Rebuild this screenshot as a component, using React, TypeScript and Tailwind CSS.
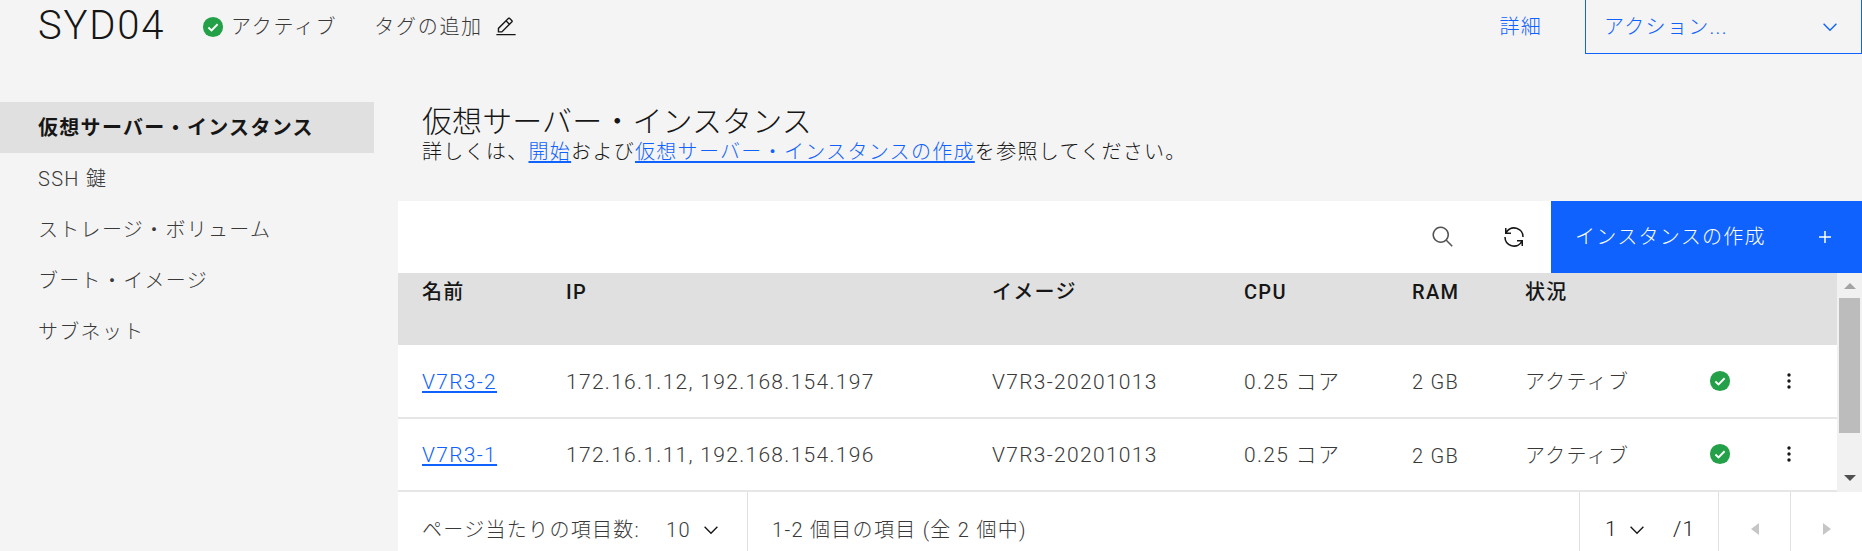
const font = "font-['Roboto','Noto_Sans_CJK_JP',sans-serif]";

const navItems = ["SSH 鍵", "ストレージ・ボリューム", "ブート・イメージ", "サブネット"];

const rows = [
  { name: "V7R3-2", ip: "172.16.1.12, 192.168.154.197" },
  { name: "V7R3-1", ip: "172.16.1.11, 192.168.154.196" },
];

const columns = "grid grid-cols-[24px_144px_426px_252px_168px_113px_184px_70px_1fr]";

function Chevron({ className }: { className: string }) {
  return (
    <svg viewBox="0 0 32 32" className={className} fill="currentColor">
      <path d="M16 22L6 12l1.4-1.4 8.6 8.6 8.6-8.6L26 12z" />
    </svg>
  );
}

function StatusIcon() {
  return (
    <svg viewBox="0 0 24 24" className="h-[22px] w-[22px]">
      <circle cx="12" cy="12" r="11" fill="#24a148" />
      <path d="M7 12.5l3.4 3.2L17 9" fill="none" stroke="#fff" strokeWidth="2" />
    </svg>
  );
}

function Dots() {
  return (
    <svg viewBox="0 0 20 20" className="h-5 w-5" fill="#161616">
      <circle cx="10" cy="4" r="1.7" />
      <circle cx="10" cy="10" r="1.7" />
      <circle cx="10" cy="16" r="1.7" />
    </svg>
  );
}

export default function App() {
  return (
    <div className={`${font} h-[551px] w-[1862px] overflow-hidden bg-[#f4f4f4] font-light tracking-[1.3px] text-[#161616]`}>
      <header className="flex h-[54px] items-center">
        <h1 className="ml-[38px] mb-[2px] w-[132px] text-[40px] leading-none tracking-[1.8px]">SYD04</h1>
        <div className="ml-[32px] flex items-center gap-[7px] text-[20px] tracking-[1.7px] text-[#393939]">
          <StatusIcon />
          <span>アクティブ</span>
        </div>
        <div className="ml-[37px] flex items-center gap-[12px] text-[20px] tracking-[1.7px] text-[#393939]">
          <span>タグの追加</span>
          <svg viewBox="0 0 32 32" className="h-[22px] w-[22px]" fill="#161616">
            <path d="M2 26H30V28H2zM25.4 9c.8-.8.8-2 0-2.8l-3.6-3.6c-.8-.8-2-.8-2.8 0l-15 15V24h6.4L25.4 9zM20.4 4L24 7.6l-3 3L17.4 7 20.4 4zM6 22v-3.6l10-10 3.6 3.6-10 10H6z" />
          </svg>
        </div>
        <a className="ml-auto text-[20px] text-[#0f62fe]">詳細</a>
        <div className="ml-[43px] flex h-[54px] w-[277px] items-center justify-between border-x border-b border-[#0f62fe] pl-[18px] pr-[20px] text-[20px] text-[#0f62fe]">
          <span>アクション...</span>
          <Chevron className="h-[22px] w-[22px]" />
        </div>
      </header>

      <div className="flex">
        <nav className="mt-[48px] w-[374px] shrink-0">
          <div className="flex h-[51px] items-center bg-[#e0e0e0] pl-[38px] text-[20px] font-bold">仮想サーバー・インスタンス</div>
          {navItems.map((item) => (
            <div key={item} className="flex h-[51px] items-center pl-[38px] text-[20px] text-[#393939]">
              {item}
            </div>
          ))}
        </nav>

        <main className="ml-[24px] flex-1">
          <div className="ml-[24px] mt-[50px] h-[97px]">
            <h2 className="text-[30px] leading-[36px] tracking-[0.1px]">仮想サーバー・インスタンス</h2>
            <p className="text-[20px] leading-[24px]">
              詳しくは、<a className="text-[#0f62fe] underline underline-offset-2">開始</a>および
              <a className="text-[#0f62fe] underline underline-offset-2">仮想サーバー・インスタンスの作成</a>を参照してください。
            </p>
          </div>

          <div className="flex h-[72px] items-center justify-end bg-white">
            <svg viewBox="0 0 32 32" className="mr-[47px] h-[24px] w-[24px]" fill="#525252">
              <path d="M29 27.586l-7.552-7.552a11.018 11.018 0 1 0-1.414 1.414L27.586 29zM4 13a9 9 0 1 1 9 9 9.01 9.01 0 0 1-9-9z" />
            </svg>
            <svg viewBox="0 0 32 32" className="mr-[25px] h-[24px] w-[24px]" fill="#161616">
              <path d="M12 10H6.78A11 11 0 0 1 27 16h2A13 13 0 0 0 6 7.68V4H4v8h8zM20 22h5.22A11 11 0 0 1 5 16H3a13 13 0 0 0 23 8.32V28h2v-8h-8z" />
            </svg>
            <button className="flex h-[72px] w-[311px] items-center justify-between bg-[#0f62fe] pl-[24px] pr-[25px] text-[20px] text-white">
              <span>インスタンスの作成</span>
              <svg viewBox="0 0 32 32" className="h-[24px] w-[24px]" fill="#fff">
                <path d="M17 15V8h-2v7H8v2h7v7h2v-7h7v-2h-7z" />
              </svg>
            </button>
          </div>

          <div className="flex h-[219px] bg-white">
            <div className="flex-1">
              <div className={`${columns} h-[72px] bg-[#e0e0e0] pt-[3px] text-[20px] font-medium leading-[32px]`}>
                <span className="col-start-2">名前</span>
                <span>IP</span>
                <span>イメージ</span>
                <span>CPU</span>
                <span>RAM</span>
                <span>状況</span>
              </div>
              {rows.map((row) => (
                <div key={row.name} className={`${columns} h-[73.5px] items-center border-b-2 border-[#e6e6e6] text-[20px] text-[#393939]`}>
                  <a className="col-start-2 pt-[3px] text-[21px] text-[#0f62fe] underline underline-offset-2">{row.name}</a>
                  <span className="pt-[3px] text-[21px]">{row.ip}</span>
                  <span className="pt-[3px] text-[21px]">V7R3-20201013</span>
                  <span className="pt-[3px] text-[21px]">0.25 コア</span>
                  <span className="pt-[3px]">2 GB</span>
                  <span className="pt-[3px]">アクティブ</span>
                  <StatusIcon />
                  <Dots />
                </div>
              ))}
            </div>
            <div className="flex w-[25px] flex-col items-center bg-[#f1f1f1]">
              <div className="mt-[10px] h-0 w-0 border-x-[6px] border-b-[6px] border-x-transparent border-b-[#a3a3a3]" />
              <div className="mt-[9px] h-[135px] w-[21px] bg-[#bcbcbc]" />
              <div className="mt-auto mb-[11px] h-0 w-0 border-x-[6px] border-t-[6px] border-x-transparent border-t-[#505050]" />
            </div>
          </div>

          <div className="flex h-[59px] bg-white text-[20px] text-[#393939]">
            <div className="flex w-[350px] items-center border-r border-[#e0e0e0] pl-[24px] pt-[16px]">
              <span>ページ当たりの項目数:</span>
              <span className="ml-[26px]">10</span>
              <Chevron className="ml-[9px] h-[22px] w-[22px] text-[#161616]" />
            </div>
            <div className="flex w-[831px] items-center pl-[24px] pt-[16px]">1-2 個目の項目 (全 2 個中)</div>
            <div className="flex w-[140px] items-center border-x border-[#e0e0e0] pl-[25px] pt-[16px] text-[#161616]">
              <span className="text-[21px]">1</span>
              <Chevron className="ml-[8px] h-[22px] w-[22px]" />
              <span className="ml-[25px] text-[21px]">/1</span>
            </div>
            <div className="flex w-[72px] items-center justify-center border-r border-[#e0e0e0] pt-[14px]">
              <div className="h-0 w-0 border-y-[6px] border-r-[8px] border-y-transparent border-r-[#c6c6c6]" />
            </div>
            <div className="flex flex-1 items-center justify-center pt-[14px]">
              <div className="h-0 w-0 border-y-[6px] border-l-[8px] border-y-transparent border-l-[#c6c6c6]" />
            </div>
          </div>
        </main>
      </div>
    </div>
  );
}
